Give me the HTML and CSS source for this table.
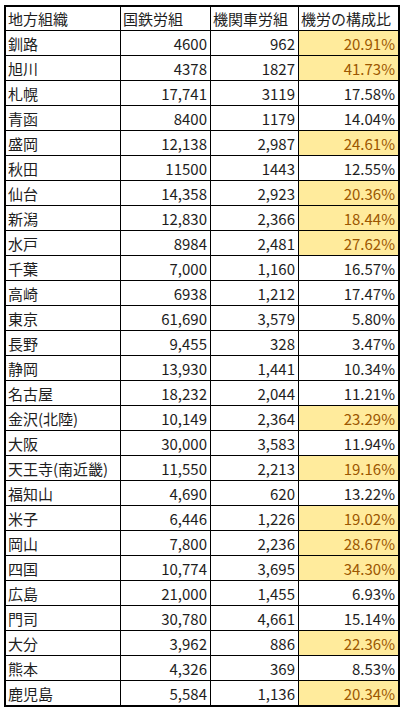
FILE: index.html
```html
<!DOCTYPE html>
<html lang="ja">
<head>
<meta charset="utf-8">
<link rel="stylesheet" href="styles.css">
</head>
<body>
<div class="sheet">
  <div class="c h">地方組織</div><div class="c h">国鉄労組</div><div class="c h">機関車労組</div><div class="c h">機労の構成比</div>
  <div class="c">釧路</div><div class="c n">4600</div><div class="c n">962</div><div class="c n hl">20.91%</div>
  <div class="c">旭川</div><div class="c n">4378</div><div class="c n">1827</div><div class="c n hl">41.73%</div>
  <div class="c">札幌</div><div class="c n">17,741</div><div class="c n">3119</div><div class="c n">17.58%</div>
  <div class="c">青函</div><div class="c n">8400</div><div class="c n">1179</div><div class="c n">14.04%</div>
  <div class="c">盛岡</div><div class="c n">12,138</div><div class="c n">2,987</div><div class="c n hl">24.61%</div>
  <div class="c">秋田</div><div class="c n">11500</div><div class="c n">1443</div><div class="c n">12.55%</div>
  <div class="c">仙台</div><div class="c n">14,358</div><div class="c n">2,923</div><div class="c n hl">20.36%</div>
  <div class="c">新潟</div><div class="c n">12,830</div><div class="c n">2,366</div><div class="c n hl">18.44%</div>
  <div class="c">水戸</div><div class="c n">8984</div><div class="c n">2,481</div><div class="c n hl">27.62%</div>
  <div class="c">千葉</div><div class="c n">7,000</div><div class="c n">1,160</div><div class="c n">16.57%</div>
  <div class="c">高崎</div><div class="c n">6938</div><div class="c n">1,212</div><div class="c n">17.47%</div>
  <div class="c">東京</div><div class="c n">61,690</div><div class="c n">3,579</div><div class="c n">5.80%</div>
  <div class="c">長野</div><div class="c n">9,455</div><div class="c n">328</div><div class="c n">3.47%</div>
  <div class="c">静岡</div><div class="c n">13,930</div><div class="c n">1,441</div><div class="c n">10.34%</div>
  <div class="c">名古屋</div><div class="c n">18,232</div><div class="c n">2,044</div><div class="c n">11.21%</div>
  <div class="c">金沢(北陸)</div><div class="c n">10,149</div><div class="c n">2,364</div><div class="c n hl">23.29%</div>
  <div class="c">大阪</div><div class="c n">30,000</div><div class="c n">3,583</div><div class="c n">11.94%</div>
  <div class="c">天王寺(南近畿)</div><div class="c n">11,550</div><div class="c n">2,213</div><div class="c n hl">19.16%</div>
  <div class="c">福知山</div><div class="c n">4,690</div><div class="c n">620</div><div class="c n">13.22%</div>
  <div class="c">米子</div><div class="c n">6,446</div><div class="c n">1,226</div><div class="c n hl">19.02%</div>
  <div class="c">岡山</div><div class="c n">7,800</div><div class="c n">2,236</div><div class="c n hl">28.67%</div>
  <div class="c">四国</div><div class="c n">10,774</div><div class="c n">3,695</div><div class="c n hl">34.30%</div>
  <div class="c">広島</div><div class="c n">21,000</div><div class="c n">1,455</div><div class="c n">6.93%</div>
  <div class="c">門司</div><div class="c n">30,780</div><div class="c n">4,661</div><div class="c n">15.14%</div>
  <div class="c">大分</div><div class="c n">3,962</div><div class="c n">886</div><div class="c n hl">22.36%</div>
  <div class="c">熊本</div><div class="c n">4,326</div><div class="c n">369</div><div class="c n">8.53%</div>
  <div class="c">鹿児島</div><div class="c n">5,584</div><div class="c n">1,136</div><div class="c n hl">20.34%</div>
</div>
</body>
</html>
```
FILE: styles.css
```css
html, body {
  margin: 0;
  padding: 0;
  background: #fff;
}
body {
  font-family: "Noto Sans CJK JP", "Noto Sans", sans-serif;
  font-size: 15px;
  color: #1e1e1e;
}
.sheet {
  margin: 5px 0 0 4px;
  width: 396px;
  box-sizing: border-box;
  border: 2px solid #000;
  display: grid;
  grid-template-columns: 115px 90px 88px 99px;
  grid-template-rows: 24px repeat(26, 25px) 24px;
}
.c {
  display: flex;
  align-items: center;
  padding: 0 2px 0 2px;
  border-right: 1px solid #000;
  border-bottom: 1px solid #000;
  white-space: nowrap;
  overflow: hidden;
  line-height: 1;
}
.c:nth-child(4n) {
  border-right: none;
}
.c:nth-last-child(-n+4) {
  border-bottom: none;
}
.n {
  justify-content: flex-end;
  padding-right: 3px;
}
.hl {
  background: #ffeb9c;
  color: #9c5700;
}
```
